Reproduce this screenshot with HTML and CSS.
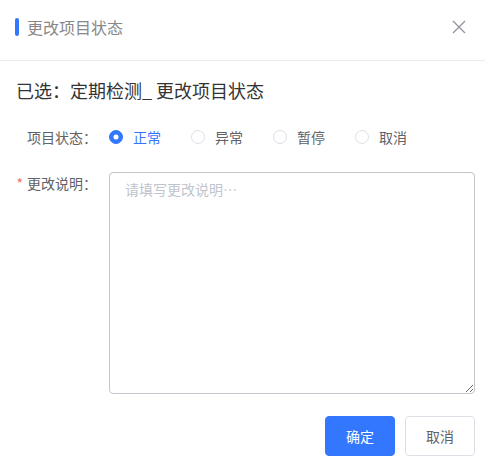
FILE: index.html
```html
<!DOCTYPE html>
<html lang="zh">
<head>
<meta charset="utf-8">
<link rel="stylesheet" href="styles.css">
</head>
<body>
<div class="dialog">
  <div class="header">
    <span class="bar"></span>
    <span class="title">更改项目状态</span>
    <svg class="close" width="14" height="14" viewBox="0 0 14 14"><path d="M1 1L13 13M13 1L1 13" stroke="#909399" stroke-width="1.3" fill="none"/></svg>
  </div>
  <div class="body">
    <div class="selected">已选：定期检测_ 更改项目状态</div>
    <div class="form-item radio-item">
      <label class="label">项目状态：</label>
      <div class="radios">
        <span class="radio checked"><span class="circle"></span><span class="rtext">正常</span></span>
        <span class="radio"><span class="circle"></span><span class="rtext">异常</span></span>
        <span class="radio"><span class="circle"></span><span class="rtext">暂停</span></span>
        <span class="radio"><span class="circle"></span><span class="rtext">取消</span></span>
      </div>
    </div>
    <div class="form-item desc-item">
      <label class="label"><span class="star">*</span>更改说明：</label>
      <textarea class="textarea" placeholder="请填写更改说明…"></textarea>
    </div>
    <div class="footer">
      <button class="btn primary">确定</button>
      <button class="btn">取消</button>
    </div>
  </div>
</div>
</body>
</html>
```
FILE: styles.css
```css
* { box-sizing: border-box; }
body {
  margin: 0;
  background: #fff;
  font-family: "Noto Sans CJK SC", "Noto Sans", sans-serif;
  color: #333;
}
.dialog { width: 485px; }
.header {
  height: 61px;
  border-bottom: 1px solid #e9eaec;
  display: flex;
  align-items: center;
  padding: 0 19px 6px 15px;
}
.bar {
  width: 4px;
  height: 18px;
  border-radius: 2px;
  background: #3377ff;
  margin-right: 8px;
}
.title {
  font-size: 16px;
  line-height: 20px;
  color: #888;
  flex: 1;
}
.close { display: block; }
.body { padding: 0 10px 0 16px; }
.selected {
  margin-top: 17px;
  font-size: 18px;
  line-height: 24px;
  color: #333;
}
.form-item { display: flex; }
.radio-item { margin-top: 25px; align-items: center; }
.label {
  width: 93px;
  text-align: right;
  padding-right: 12px;
  font-size: 14px;
  line-height: 20px;
  color: #606266;
}
.radios { display: flex; align-items: center; }
.radio {
  display: flex;
  align-items: center;
  margin-right: 27px;
  font-size: 14px;
  line-height: 20px;
  color: #606266;
}
.circle {
  width: 14px;
  height: 14px;
  border: 1px solid #dcdfe6;
  border-radius: 50%;
  margin-right: 10px;
  position: relative;
}
.rtext { width: 31px; }
.radio.checked { color: #3377ff; }
.radio.checked .circle {
  background: #3377ff;
  border-color: #3377ff;
}
.radio.checked .circle::after {
  content: "";
  position: absolute;
  width: 5px;
  height: 5px;
  border-radius: 50%;
  background: #fff;
  left: 50%;
  top: 50%;
  transform: translate(-50%, -50%);
}
.desc-item { margin-top: 25px; align-items: flex-start; }
.desc-item .label { line-height: 22px; }
.star { color: #f56c6c; margin-right: 4px; }
.textarea {
  width: 366px;
  height: 222px;
  border: 1px solid #c3c6cd;
  border-radius: 4px;
  padding: 6px 15px;
  font-family: "Noto Sans CJK SC", "Noto Sans", sans-serif;
  font-size: 14px;
  line-height: 20px;
  color: #606266;
  outline: none;
  margin: 0;
}
.textarea::placeholder { color: #c0c4cc; }
.footer {
  display: flex;
  justify-content: flex-end;
  gap: 10px;
  margin-top: 22px;
}
.btn {
  width: 70px;
  height: 40px;
  border: 1px solid #dcdfe6;
  border-radius: 4px;
  background: #fff;
  color: #606266;
  font-family: "Noto Sans CJK SC", "Noto Sans", sans-serif;
  font-size: 14px;
  padding: 0;
}
.btn.primary {
  background: #3377ff;
  border-color: #3377ff;
  color: #fff;
}
```
